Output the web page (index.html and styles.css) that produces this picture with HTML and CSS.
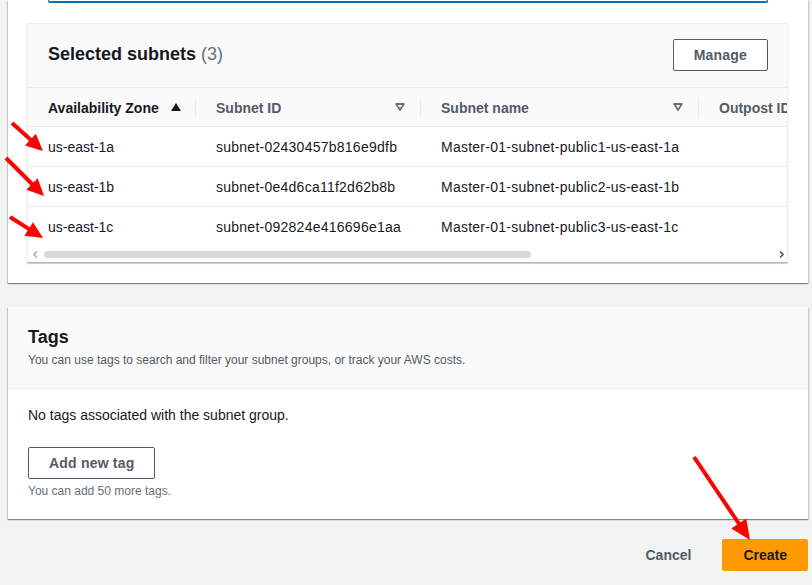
FILE: index.html
```html
<!DOCTYPE html>
<html lang="en">
<head>
<meta charset="utf-8">
<title>Create subnet group</title>
<link rel="stylesheet" href="styles.css">
</head>
<body>
<div class="page">
  <section class="panel panel-top">
    <div class="input-tail"></div>
    <div class="container">
      <div class="container-header">
        <h2 class="title">Selected subnets <span class="count">(3)</span></h2>
        <button class="btn">Manage</button>
      </div>
      <div class="table-wrap">
        <div class="table">
          <div class="thead">
            <div class="th c1"><span class="label strong">Availability Zone</span>
              <svg class="sort" width="10" height="8" viewBox="0 0 10 8"><path d="M5 0 L10 8 L0 8 Z" fill="#16191f"/></svg>
            </div>
            <div class="th c2"><span class="sep"></span><span class="label">Subnet ID</span>
              <svg class="sort" width="10" height="8" viewBox="0 0 10 8"><path d="M1.2 1 L8.8 1 L5 7 Z" fill="none" stroke="#687078" stroke-width="1.8" stroke-linejoin="round"/></svg>
            </div>
            <div class="th c3"><span class="sep"></span><span class="label">Subnet name</span>
              <svg class="sort" width="10" height="8" viewBox="0 0 10 8"><path d="M1.2 1 L8.8 1 L5 7 Z" fill="none" stroke="#687078" stroke-width="1.8" stroke-linejoin="round"/></svg>
            </div>
            <div class="th c4"><span class="sep"></span><span class="label">Outpost ID</span></div>
          </div>
          <div class="tr">
            <div class="td c1">us-east-1a</div>
            <div class="td c2">subnet-02430457b816e9dfb</div>
            <div class="td c3">Master-01-subnet-public1-us-east-1a</div>
            <div class="td c4">-</div>
          </div>
          <div class="tr">
            <div class="td c1">us-east-1b</div>
            <div class="td c2">subnet-0e4d6ca11f2d62b8b</div>
            <div class="td c3">Master-01-subnet-public2-us-east-1b</div>
            <div class="td c4">-</div>
          </div>
          <div class="tr last">
            <div class="td c1">us-east-1c</div>
            <div class="td c2">subnet-092824e416696e1aa</div>
            <div class="td c3">Master-01-subnet-public3-us-east-1c</div>
            <div class="td c4">-</div>
          </div>
        </div>
      </div>
      <div class="scrollbar">
        <svg class="arrow-l" width="5" height="7" viewBox="0 0 5 7"><path d="M4 0.5 L1 3.5 L4 6.5" fill="none" stroke="#aab7b8" stroke-width="1.6"/></svg>
        <div class="track"><div class="thumb"></div></div>
        <svg class="arrow-r" width="5" height="7" viewBox="0 0 5 7"><path d="M1 0.5 L4 3.5 L1 6.5" fill="none" stroke="#545b64" stroke-width="1.6"/></svg>
      </div>
    </div>
  </section>

  <section class="panel panel-tags">
    <div class="panel-header">
      <h2 class="title">Tags</h2>
      <p class="desc">You can use tags to search and filter your subnet groups, or track your AWS costs.</p>
    </div>
    <div class="panel-body">
      <p class="empty">No tags associated with the subnet group.</p>
      <button class="btn btn-add">Add new tag</button>
      <p class="hint">You can add 50 more tags.</p>
    </div>
  </section>

  <div class="footer">
    <button class="btn-link">Cancel</button>
    <button class="btn-primary">Create</button>
  </div>

  <svg class="annotations" width="812" height="585" viewBox="0 0 812 585">
    <g stroke="#ff0000" stroke-width="4" stroke-linecap="butt" fill="#ff0000">
      <line x1="12" y1="123" x2="31" y2="140"/>
      <path d="M25 145.5 L35.8 133.7 L43 151 Z" stroke="none"/>
      <line x1="6" y1="158" x2="33" y2="185"/>
      <path d="M26.3 189.7 L37.7 178.3 L44 196 Z" stroke="none"/>
      <line x1="10" y1="217" x2="29.5" y2="229.4"/>
      <path d="M24.4 235.7 L33 222.2 L43 238 Z" stroke="none"/>
      <line x1="694" y1="457" x2="739.5" y2="524.5"/>
      <path d="M731.3 528.4 L746.3 518.4 L750 540 Z" stroke="none"/>
    </g>
  </svg>
</div>
</body>
</html>
```

FILE: styles.css
```css
* { box-sizing: border-box; }
html, body { margin: 0; padding: 0; }
body {
  background: #f2f3f3;
  font-family: "Liberation Sans", Arial, sans-serif;
  color: #16191f;
  font-size: 14px;
  line-height: 20px;
  width: 812px;
  height: 585px;
  overflow: hidden;
}
.page {
  position: relative;
  padding: 0 4px 0 8px;
  height: 585px;
}
.panel {
  background: #ffffff;
  box-shadow: 0 1px 1px 0 rgba(0, 28, 36, 0.3), 1px 1px 1px 0 rgba(0, 28, 36, 0.15), -1px 1px 1px 0 rgba(0, 28, 36, 0.15);
}
.panel-top {
  padding: 0 20px 20px 19px;
}
.input-tail {
  height: 3px;
  margin: 0 20px 0 21px;
  border: 1px solid #0073bb;
  border-top: 0;
  border-radius: 0 0 2px 2px;
  box-shadow: inset 0 -1px 0 #0073bb;
}
.container {
  margin-top: 20px;
  border: 1px solid #eaeded;
  border-bottom: 1px solid #aab7b8;
  background: #fff;
  box-shadow: 0 1px 1px 0 rgba(0, 28, 36, 0.2);
}
.container-header {
  height: 64px;
  background: #fafafa;
  border-bottom: 1px solid #eaeded;
  display: flex;
  align-items: center;
  justify-content: space-between;
  padding: 0 19px 3px 20px;
}
.title {
  margin: 0;
  font-size: 18px;
  line-height: 22px;
  font-weight: 700;
  color: #16191f;
}
.count {
  font-weight: 400;
  color: #687078;
}
.btn {
  height: 32px;
  padding: 0 20px;
  background: #fff;
  border: 1px solid #545b64;
  border-radius: 2px;
  color: #545b64;
  font-family: inherit;
  font-size: 14px;
  font-weight: 700;
  letter-spacing: 0.2px;
}
.container-header .btn { margin-top: 1px; }
.table-wrap {
  overflow: hidden;
}
.table {
  width: 960px;
}
.thead, .tr {
  display: flex;
}
.thead {
  height: 39px;
  background: #fafafa;
  border-bottom: 1px solid #eaeded;
  font-weight: 700;
  color: #545b64;
  padding-top: 1px;
}
.c1 { width: 167px; flex: none; }
.c2 { width: 225px; flex: none; }
.c3 { width: 278px; flex: none; }
.c4 { width: 290px; flex: none; }
.th {
  display: flex;
  align-items: center;
  padding-right: 15px;
}
.th.c1 { padding-left: 20px; padding-right: 14px; }
.th .label { flex: 1; white-space: nowrap; }
.th .strong { color: #16191f; }
.sep {
  width: 1px;
  height: 20px;
  background: #eaeded;
  margin-right: 20px;
}
.sort { flex: none; margin-top: -1px; }
.tr {
  height: 40px;
  border-bottom: 1px solid #eaeded;
  align-items: center;
}
.tr.last {
  border-bottom: 0;
}
.td {
  padding-left: 21px;
  white-space: nowrap;
  color: #16191f;
  letter-spacing: 0.25px;
}
.td.c1 { padding-left: 20px; letter-spacing: 0; }
.td.c4 { visibility: hidden; }
.scrollbar {
  height: 15px;
  display: flex;
  align-items: center;
  padding: 0 3px 0 5px;
}
.arrow-l { flex: none; margin-right: 6px; }
.arrow-r { flex: none; margin-left: 6px; }
.track {
  flex: 1;
  height: 7px;
}
.thumb {
  width: 487px;
  height: 7px;
  border-radius: 4px;
  background: #d5dbdb;
}
.panel-tags {
  margin-top: 24px;
}
.panel-header {
  background: #fafafa;
  border-bottom: 1px solid #eaeded;
  padding: 19px 20px 20px;
}
.desc {
  margin: 4px 0 0;
  font-size: 12px;
  line-height: 16px;
  color: #545b64;
}
.panel-body {
  padding: 16px 20px 20px;
}
.empty {
  margin: 0;
  color: #16191f;
}
.btn-add {
  margin-top: 22px;
  display: block;
}
.hint {
  margin: 4px 0 0;
  font-size: 12px;
  line-height: 16px;
  color: #687078;
}
.footer {
  display: flex;
  justify-content: flex-end;
  gap: 10px;
  margin-top: 20px;
}
.btn-link {
  height: 32px;
  padding: 0 20px;
  background: transparent;
  border: 1px solid transparent;
  font-family: inherit;
  font-size: 14px;
  font-weight: 700;
  color: #545b64;
}
.btn-primary {
  height: 32px;
  padding: 0 20px;
  background: #ff9900;
  border: 1px solid #ff9900;
  border-radius: 2px;
  font-family: inherit;
  font-size: 14px;
  font-weight: 700;
  color: #16191f;
}
.annotations {
  position: absolute;
  left: 0;
  top: 0;
  pointer-events: none;
}
```
